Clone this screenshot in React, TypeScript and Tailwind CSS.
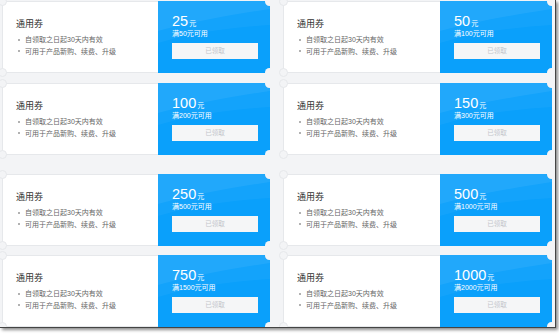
import React from 'react';

interface Coupon {
  amount: number;
  min: number;
}

const coupons: Coupon[] = [
  { amount: 25, min: 50 },
  { amount: 50, min: 100 },
  { amount: 100, min: 200 },
  { amount: 150, min: 300 },
  { amount: 250, min: 500 },
  { amount: 500, min: 1000 },
  { amount: 750, min: 1500 },
  { amount: 1000, min: 2000 },
];

const font = { fontFamily: '"Liberation Sans", "Noto Sans CJK SC", sans-serif' };

const CouponCard: React.FC<{ coupon: Coupon }> = ({ coupon }) => {
  return (
    <div className="relative flex h-[72px] rounded-[3px] border border-[#e6e8eb] bg-white">
      <div className="flex-1 pl-[13px] pt-[16px]">
        <div className="text-[9px] leading-[12px] text-[#333]">通用券</div>
        <ul className="mt-[4px] text-[7px] leading-[11.5px] text-[#666]">
          <li className="flex items-center">
            <span className="ml-[2px] mr-[5px] h-[2px] w-[2px] rounded-full bg-[#999]" />
            自领取之日起30天内有效
          </li>
          <li className="flex items-center">
            <span className="ml-[2px] mr-[5px] h-[2px] w-[2px] rounded-full bg-[#999]" />
            可用于产品新购、续费、升级
          </li>
        </ul>
      </div>
      <div className="relative -my-px -mr-px w-[112px] overflow-hidden rounded-r-[3px] bg-[#0aa0fb] pl-[14px] pt-[13px]">
        <svg className="absolute inset-0 h-full w-full" viewBox="0 0 112 72" preserveAspectRatio="none">
          <path d="M0 30 C30 22 70 14 112 8 L112 0 L0 0 Z" fill="#ffffff" opacity="0.06" />
          <path d="M0 42 C40 30 80 26 112 24 L112 0 L0 0 Z" fill="#ffffff" opacity="0.04" />
        </svg>
        <div className="relative">
          <div className="flex h-[15px] items-baseline text-white">
            <span className="text-[14.5px] leading-[15px]">{coupon.amount}</span>
            <span className="ml-[1px] text-[7px]">元</span>
          </div>
          <div className="text-[7px] leading-[9px] text-white">满{coupon.min}元可用</div>
          <div className="mt-[5px] flex h-[16px] w-[86px] items-center justify-center bg-[#f5f6f7] text-[6.5px] text-[#c3c6cb]">
            已领取
          </div>
        </div>
      </div>
      <span className="absolute -left-[5px] -top-[5px] h-[9px] w-[9px] rounded-full border border-[#e6e8eb] bg-[#f3f4f6]" />
      <span className="absolute -bottom-[5px] -left-[5px] h-[9px] w-[9px] rounded-full border border-[#e6e8eb] bg-[#f3f4f6]" />
      <span className="absolute -right-[5px] -top-[5px] h-[9px] w-[9px] rounded-full bg-[#f3f4f6]" />
      <span className="absolute -bottom-[5px] -right-[5px] h-[9px] w-[9px] rounded-full bg-[#f3f4f6]" />
    </div>
  );
};

const App: React.FC = () => {
  const rows = [coupons.slice(0, 2), coupons.slice(2, 4), coupons.slice(4, 6), coupons.slice(6, 8)];
  const rowMargins = ['mt-[1px]', 'mt-[10px]', 'mt-[19px]', 'mt-[9px]'];

  return (
    <div className="h-[334px] w-[559px] bg-white" style={font}>
      <div className="h-[328px] w-[556px] overflow-hidden border-b border-r border-[#444] bg-[#f3f4f6] shadow-[2px_2px_3px_rgba(0,0,0,0.45)]">
        {rows.map((row, i) => (
          <div key={i} className={`grid grid-cols-[268px_269px] gap-x-[13px] pl-[2px] ${rowMargins[i]}`}>
            {row.map((c) => (
              <CouponCard key={c.amount} coupon={c} />
            ))}
          </div>
        ))}
      </div>
    </div>
  );
};

export default App;
